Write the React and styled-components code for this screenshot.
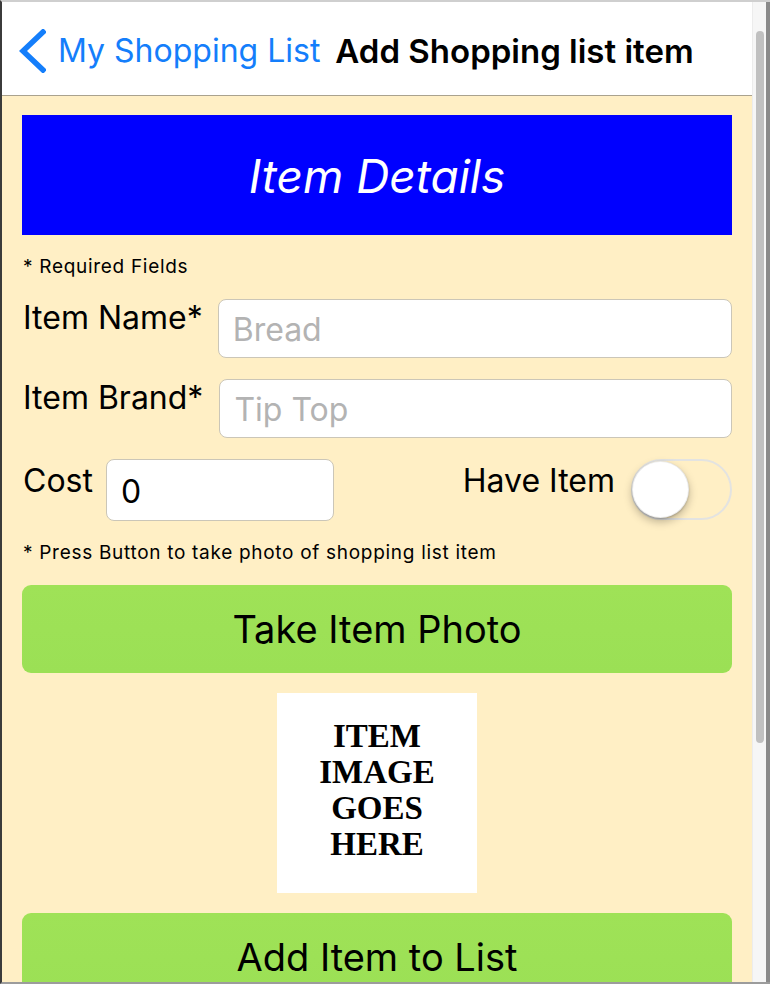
import React from 'react';
import styled, { createGlobalStyle } from 'styled-components';

const GlobalStyle = createGlobalStyle`
    html, body {
        margin: 0;
        padding: 0;
        overflow: hidden;
        background: #3b3b3b;
    }
    * {
        box-sizing: border-box;
    }
`;

const Window = styled.div`
    display: flex;
    height: 984px;
    width: 770px;
    border-top: 2px solid #cfcfcf;
    border-bottom: 2px solid #9c9c9c;
    border-left: 2px solid #3b3b3b;
    background: #3b3b3b;
    overflow: hidden;
    font-family: Inter, "Noto Sans", sans-serif;
`;

const Screen = styled.div`
    width: 750px;
    display: flex;
    flex-direction: column;
    background: #ffefc5;
    overflow: hidden;
`;

const ScrollTrack = styled.div`
    width: 14px;
    background: #f6f6f6;
    border-left: 1px solid #ececec;
    padding: 29px 2px 0 3px;
`;

const ScrollThumb = styled.div`
    height: 712px;
    width: 8px;
    border-radius: 4px;
    background: #c0c0c0;
`;

const WindowEdge = styled.div`
    width: 4px;
    background: #8a8a8a;
`;

const NavBar = styled.div`
    height: 94px;
    flex: none;
    display: flex;
    align-items: center;
    padding: 4px 0 0 16px;
    background: #fff;
    border-bottom: 1px solid #aaa28e;
`;

const BackLink = styled.div`
    display: flex;
    align-items: center;
    gap: 12px;
    color: #147efb;
    font-size: 32px;
`;

const NavTitle = styled.div`
    margin-left: 15px;
    font-size: 33px;
    font-weight: 600;
    color: #000;
`;

const Body = styled.div`
    display: flex;
    flex-direction: column;
    padding: 19px 20px 0;
`;

const Banner = styled.div`
    height: 120px;
    flex: none;
    display: flex;
    align-items: center;
    justify-content: center;
    background: #0000ff;
    color: #fff;
    font-size: 46px;
    font-style: italic;
    padding-top: 2px;
`;

const Hint = styled.div`
    font-size: 19px;
    line-height: 22px;
    letter-spacing: 0.7px;
    color: #000;
    margin-top: ${p => p.$top || 21}px;
    padding-left: 1px;
`;

const Row = styled.div`
    display: flex;
    align-items: flex-start;
    margin-top: ${p => p.$top || 21}px;
`;

const Label = styled.div`
    flex: none;
    font-size: 32px;
    line-height: 36px;
    padding-top: ${p => p.$pad || 1}px;
    margin-right: ${p => p.$gap || 15}px;
    padding-left: 1px;
    color: #000;
`;

const Input = styled.input`
    flex: ${p => (p.$width ? 'none' : '1')};
    width: ${p => (p.$width ? `${p.$width}px` : 'auto')};
    min-width: 0;
    height: ${p => p.$height || 59}px;
    border: 1px solid #cbc6b8;
    border-radius: 8px;
    background: #fff;
    padding: 2px 14px 0;
    font-family: Inter, "Noto Sans", sans-serif;
    font-size: 32px;
    color: #000;
    outline: none;
    &::placeholder {
        color: #b3b3b3;
    }
`;

const Spacer = styled.div`
    flex: 1;
`;

const Switch = styled.div`
    position: relative;
    flex: none;
    width: 101px;
    height: 61px;
    border: 2px solid #e3e3e1;
    border-radius: 31px;
`;

const Knob = styled.div`
    position: absolute;
    left: -1px;
    top: 0;
    width: 57px;
    height: 57px;
    border-radius: 50%;
    background: #fff;
    border: 1px solid rgba(0, 0, 0, 0.08);
    box-shadow: 0 4px 8px rgba(0, 0, 0, 0.25), 0 1px 2px rgba(0, 0, 0, 0.2);
`;

const Button = styled.button`
    flex: none;
    height: 88px;
    margin-top: ${p => p.$top || 20}px;
    border: none;
    border-radius: 9px;
    background: linear-gradient(#9fe257, #9be055);
    font-family: Inter, "Noto Sans", sans-serif;
    font-size: 38px;
    color: #000;
    cursor: pointer;
    padding: 0;
`;

const ImageBox = styled.div`
    align-self: center;
    width: 200px;
    height: 200px;
    margin-top: 20px;
    padding-bottom: 6px;
    background: #fff;
    display: flex;
    align-items: center;
    justify-content: center;
    text-align: center;
    font-family: "Liberation Serif", "DejaVu Serif", serif;
    font-weight: bold;
    font-size: 33px;
    line-height: 36px;
    color: #000;
`;

const Chevron = () => (
    <svg width="28" height="44" viewBox="0 0 28 44">
        <path d="M25 3 L5 22 L25 41" fill="none" stroke="#147efb" strokeWidth="5.5" strokeLinecap="square" />
    </svg>
);

const App = () => {
    return (
        <>
            <GlobalStyle />
            <Window>
                <Screen>
                    <NavBar>
                        <BackLink>
                            <Chevron />
                            My Shopping List
                        </BackLink>
                        <NavTitle>Add Shopping list item</NavTitle>
                    </NavBar>
                    <Body>
                        <Banner>Item Details</Banner>
                        <Hint>* Required Fields</Hint>
                        <Row $top={21}>
                            <Label>Item Name*</Label>
                            <Input placeholder="Bread" />
                        </Row>
                        <Row>
                            <Label $gap={16}>Item Brand*</Label>
                            <Input placeholder="Tip Top" />
                        </Row>
                        <Row>
                            <Label $pad={4} $gap={13}>Cost</Label>
                            <Input $width={228} $height={62} defaultValue="0" />
                            <Spacer />
                            <Label $pad={4} $gap={16}>Have Item</Label>
                            <Switch>
                                <Knob />
                            </Switch>
                        </Row>
                        <Hint $top={21}>* Press Button to take photo of shopping list item</Hint>
                        <Button $top={21}>Take Item Photo</Button>
                        <ImageBox>
                            ITEM<br />IMAGE<br />GOES<br />HERE
                        </ImageBox>
                        <Button>Add Item to List</Button>
                    </Body>
                </Screen>
                <ScrollTrack>
                    <ScrollThumb />
                </ScrollTrack>
                <WindowEdge />
            </Window>
        </>
    );
};

export default App;
